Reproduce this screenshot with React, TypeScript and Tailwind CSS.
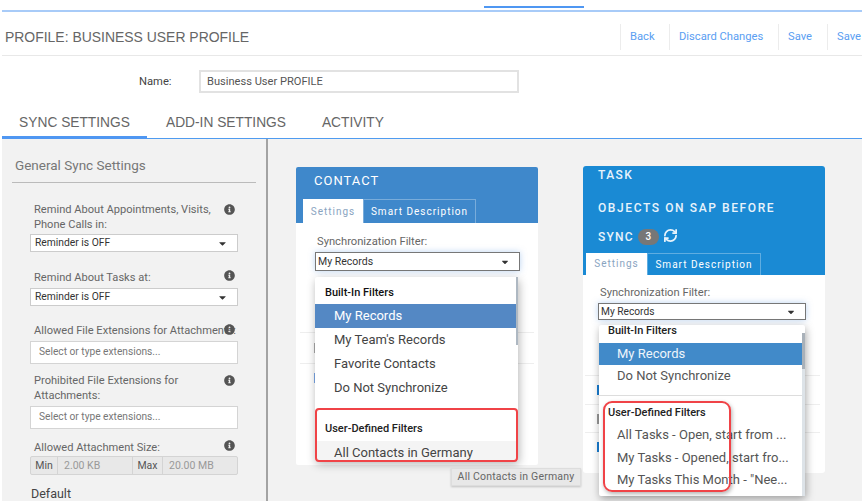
import React from "react";
import { FaCaretDown, FaInfoCircle } from "react-icons/fa";
import { RefreshCw } from "lucide-react";

const roboto = "font-['Roboto',sans-serif]";

const Info = ({ className }: { className: string }) => (
  <FaInfoCircle className={`absolute right-[31px] h-[11px] w-[11px] text-[#555] ${className}`} />
);

const SmallSelect = ({ className = "" }: { className?: string }) => (
  <div className={`ml-[28px] flex h-[18px] w-[208px] items-center justify-between border border-[#ccc] bg-white pl-[4px] pr-[9px] text-[10.3px] text-[#333] ${className}`}>
    <span>Reminder is OFF</span>
    <FaCaretDown className="h-[11px] w-[11px] text-[#333]" />
  </div>
);

const ExtInput = ({ className = "" }: { className?: string }) => (
  <div className={`ml-[28px] flex h-[23px] w-[208px] items-center border border-[#d4d4d4] bg-white pb-[1px] pl-[8px] text-[10.2px] text-[#777] ${className}`}>
    Select or type extensions...
  </div>
);

const Tabs = ({ className, wide }: { className: string; wide?: boolean }) => (
  <div className={`flex items-stretch tracking-[1px] ${className}`}>
    <div className={`flex items-center justify-center bg-white text-[#8aa4bf] ${wide ? "w-[61px]" : "w-[60px]"}`}>Settings</div>
    <div className={`flex items-center justify-center border-x border-t border-white/30 text-white ${wide ? "w-[114px]" : "w-[113px]"}`}>Smart Description</div>
  </div>
);

const SyncFilter = ({ width, labelClass, boxClass }: { width: string; labelClass: string; boxClass: string }) => (
  <>
    <div className={`text-[11.2px] text-[#666] ${labelClass}`}>Synchronization Filter:</div>
    <div className={`flex items-center justify-between border border-[#777] bg-white pl-[2px] pr-[9px] text-[#333] shadow-[0_0_6px_rgba(120,170,230,0.5)] ${width} ${boxClass}`}>
      <span>My Records</span>
      <FaCaretDown className="h-[10px] w-[10px] text-[#333]" />
    </div>
  </>
);

const Row = ({ height }: { height: string }) => (
  <div className={`border-t border-[#eee] ${height}`} />
);

export default function App() {
  return (
    <div className={`relative h-[501px] w-[862px] overflow-hidden bg-white ${roboto}`}>
      {/* top strip */}
      <div className="ml-[2px] flex h-[12px] items-start border-b-2 border-[#a8cbf8]">
        <div className="ml-[482px] mt-[6px] h-[2px] w-[100px] bg-[#4f97f2]" />
      </div>

      {/* page header */}
      <div className="ml-[2px] flex h-[44px] items-center justify-between border-b border-[#e8e8e8] pt-[7px]">
        <h1 className="ml-[3px] font-['Liberation_Sans',sans-serif] text-[13.95px] text-[#666]">PROFILE: BUSINESS USER PROFILE</h1>
        <div className="flex h-[26px] text-[11.2px] text-[#5a9ef2]">
          <div className="flex w-[49px] items-center border-l border-[#ececec] pl-[9px]">Back</div>
          <div className="flex w-[109px] items-center border-l border-[#ececec] pl-[9px]">Discard Changes</div>
          <div className="flex w-[49px] items-center border-l border-[#ececec] pl-[9px]">Save</div>
          <div className="flex w-[35px] items-center border-l border-[#ececec] pl-[9px]">Save</div>
        </div>
      </div>

      {/* name */}
      <div className="ml-[139px] mt-[14px] flex items-center">
        <label className="w-[60px] pt-[1px] text-[11.2px] text-[#444]">Name:</label>
        <div className="flex h-[23px] w-[320px] items-center border-2 border-[#e2e2e2] pl-[6px] pt-[1px] text-[11.1px] text-[#555]">Business User PROFILE</div>
      </div>

      {/* tabs */}
      <div className="ml-[2px] mt-[7px] flex h-[39px] border-b-[1px] border-[#4f9bf0] font-['Liberation_Sans',sans-serif] text-[13.75px] text-[#666]">
        <div className="flex h-[39px] w-[145px] items-center justify-center border-b-[3px] border-[#4f97f2] pt-[10px]">SYNC SETTINGS</div>
        <div className="ml-[19px] flex items-center pt-[9px]">ADD-IN SETTINGS</div>
        <div className="ml-[36px] flex items-center pt-[9px]">ACTIVITY</div>
      </div>

      <div className="ml-[2px] flex h-[362px] bg-[#f2f2f2]">
        {/* left settings column */}
        <aside className="relative h-full w-[266px] border-r-2 border-[#a3a3a3]">
          <h2 className="ml-[13px] pt-[18px] text-[13.5px] leading-[17px] text-[#777]">General Sync Settings</h2>
          <div className="ml-[10px] mt-[8px] w-[244px] border-t border-[#bbb]" />
          <div className="ml-[32px] mt-[19px] w-[190px] text-[11.1px] leading-[15px] text-[#666]">Remind About Appointments, Visits, Phone Calls in:</div>
          <Info className="top-[65px]" />
          <SmallSelect className="mt-[2px]" />
          <div className="ml-[32px] mt-[18px] text-[11.1px] leading-[15px] text-[#666]">Remind About Tasks at:</div>
          <Info className="top-[131px]" />
          <SmallSelect className="mt-[3px]" />
          <div className="ml-[32px] mt-[17px] whitespace-nowrap text-[11.1px] leading-[15px] text-[#666]">Allowed File Extensions for Attachments:</div>
          <Info className="top-[185px]" />
          <ExtInput className="mt-[3px]" />
          <div className="ml-[32px] mt-[9px] w-[170px] text-[11.1px] leading-[15px] text-[#666]">Prohibited File Extensions for Attachments:</div>
          <Info className="top-[236px]" />
          <ExtInput className="mt-[3px]" />
          <div className="ml-[32px] mt-[11px] text-[11.1px] leading-[15px] text-[#666]">Allowed Attachment Size:</div>
          <Info className="top-[301px]" />
          <div className="ml-[28px] mt-[1px] flex h-[19px] w-[208px] rounded-[2px] border border-[#d4d4d4] bg-[#e8e8e8] text-[10.5px]">
            <div className="flex w-[27px] items-center justify-center border-r border-[#d4d4d4] text-[#555]">Min</div>
            <div className="flex w-[75px] items-center border-r border-[#d4d4d4] pl-[6px] text-[#999]">2.00 KB</div>
            <div className="flex w-[30px] items-center justify-center border-r border-[#d4d4d4] text-[#555]">Max</div>
            <div className="flex flex-1 items-center pl-[6px] text-[#999]">20.00 MB</div>
          </div>
          <div className="ml-[29px] mt-[11px] text-[12.5px] leading-[16px] text-[#444]">Default</div>
        </aside>

        {/* cards */}
        <main className="flex items-start gap-[45px] pl-[28px] pt-[28px]">
          <section className="relative h-[298px] w-[242px] rounded-[2px] bg-white">
            <div className="flex h-[56px] flex-col justify-between rounded-t-[2px] bg-[#3f88cb]">
              <div className="pl-[18px] pt-[6px] text-[13px] leading-[15px] tracking-[1px] text-white">CONTACT</div>
              <Tabs className="ml-[7px] h-[24px] text-[10px]" />
            </div>
            <div className="pl-[19px] pr-[19px] pt-[12px]">
              <SyncFilter width="w-[205px]" labelClass="pl-[2px] leading-[14px]" boxClass="mt-[3px] h-[19px] text-[10.5px]" />
            </div>
            <div className="mx-[4px] mt-[61px]">
              <Row height="h-[31px]" />
              <Row height="h-[31px]" />
            </div>
            <div className="absolute left-[18px] top-[176px] h-[10px] w-[2px] bg-[#aaa]" />
            <div className="absolute left-[18px] top-[206px] h-[10px] w-[2px] bg-[#7aa8e8]" />
            {/* open dropdown */}
            <div className="absolute left-[19px] top-[110px] h-[184px] w-[203px] rounded-[2px] bg-white shadow-[1px_3px_10px_rgba(0,0,0,0.3)]">
              <div className="absolute right-0 top-0 h-[68px] w-[2px] bg-[#aeb8c2]" />
              <div className="flex h-[27px] items-center pl-[10px] pt-[5px] text-[11px] font-medium text-[#111]">Built-In Filters</div>
              <div className="flex h-[24px] items-center bg-[#5488c4] pl-[19px] text-[13px] text-white">My Records</div>
              <div className="flex h-[24px] items-center pl-[19px] text-[13px] text-[#444]">My Team's Records</div>
              <div className="flex h-[24px] items-center pl-[19px] text-[13px] text-[#444]">Favorite Contacts</div>
              <div className="flex h-[24px] items-center pl-[19px] text-[13px] text-[#444]">Do Not Synchronize</div>
              <div className="flex h-[41px] items-end pb-[4px] pl-[10px] text-[11px] font-medium text-[#222]">User-Defined Filters</div>
              <div className="flex h-[20px] items-center bg-[#f4f4f4] pl-[19px] pt-[4px] text-[13px] text-[#444]">All Contacts in Germany</div>
              <div className="absolute left-0 right-0 top-[131px] h-[54px] rounded-[4px] border-2 border-[#f04347]" />
            </div>
          </section>

          <section className="relative -mt-px h-[307px] w-[242px] rounded-[3px] bg-white">
            <div className="flex h-[109px] flex-col rounded-t-[3px] bg-[#1a8ad4] text-[12px] font-medium leading-[14px] tracking-[1.6px] text-[#e8f3fb]">
              <div className="pl-[15px] pt-[2px] tracking-[1.4px]">TASK</div>
              <div className="pl-[15px] pt-[19px]">OBJECTS ON SAP BEFORE</div>
              <div className="flex items-center pl-[15px] pt-[14px] tracking-[1.2px]">
                <span>SYNC</span>
                <span className="ml-[4px] flex h-[16px] w-[21px] items-center justify-center rounded-full bg-[#777] text-[10px] tracking-normal text-white">3</span>
                <RefreshCw className="ml-[4px] -mt-[3px] h-[15px] w-[15px]" strokeWidth={2.8} />
              </div>
              <Tabs wide className="ml-[3px] mt-auto h-[22px] text-[10px] font-normal" />
            </div>
            <div className="pl-[15px] pr-[19px] pt-[11px]">
              <SyncFilter width="w-[208px]" labelClass="pl-[2px] leading-[14px]" boxClass="mt-[3px] h-[17px] text-[10.2px]" />
            </div>
            <div className="mx-[2px] mr-[5px] mt-[55px]">
              <Row height="h-[29px]" />
              <Row height="h-[28px]" />
              <Row height="h-[28px]" />
            </div>
            <div className="absolute left-[14px] top-[219px] h-[10px] w-[2px] bg-[#1a7fd4]" />
            <div className="absolute left-[14px] top-[248px] h-[10px] w-[2px] bg-[#999]" />
            <div className="absolute left-[14px] top-[276px] h-[10px] w-[2px] bg-[#1a7fd4]" />
            {/* open dropdown */}
            <div className="absolute left-[16px] top-[159px] h-[171px] w-[206px] rounded-[2px] bg-white text-[13px] text-[#555] shadow-[1px_3px_8px_rgba(0,0,0,0.35)]">
              <div className="absolute bottom-0 right-0 top-[8px] w-[3px] bg-[#dde3e8]" />
              <div className="absolute right-0 top-[8px] h-[36px] w-[3px] bg-[#a9b1b9]" />
              <div className="flex h-[18px] items-center pb-[5px] pl-[9px] text-[11px] font-medium text-[#222]">Built-In Filters</div>
              <div className="mr-[3px] flex h-[22px] items-center bg-[#418ac9] pl-[18px] text-[#eef5fb]">My Records</div>
              <div className="flex h-[22px] items-center pl-[18px]">Do Not Synchronize</div>
              <div className="mr-[3px] mt-[8px] border-t border-[#ddd]" />
              <div className="flex h-[28px] items-end pb-[3px] pl-[9px] text-[11px] font-medium text-[#222]">User-Defined Filters</div>
              <div className="flex h-[22px] items-center pl-[18px]">All Tasks - Open, start from ...</div>
              <div className="flex h-[23px] items-center pl-[18px]">My Tasks - Opened, start fro...</div>
              <div className="flex h-[22px] items-center pl-[18px]">My Tasks This Month - "Nee...</div>
              <div className="absolute left-[4px] top-[76px] h-[91px] w-[128px] rounded-[9px] border-2 border-[#f04347] shadow-[1px_2px_4px_rgba(0,0,0,0.3)]" />
            </div>
          </section>
        </main>
      </div>

      {/* hover tooltip */}
      <div className="absolute left-[451px] top-[468px] flex h-[18px] w-[130px] items-center justify-center border border-[#ddd] bg-[#e8e8e8] text-[10.5px] tracking-[0.2px] text-[#666] shadow-[0_1px_2px_rgba(0,0,0,0.2)]">
        All Contacts in Germany
      </div>
    </div>
  );
}
